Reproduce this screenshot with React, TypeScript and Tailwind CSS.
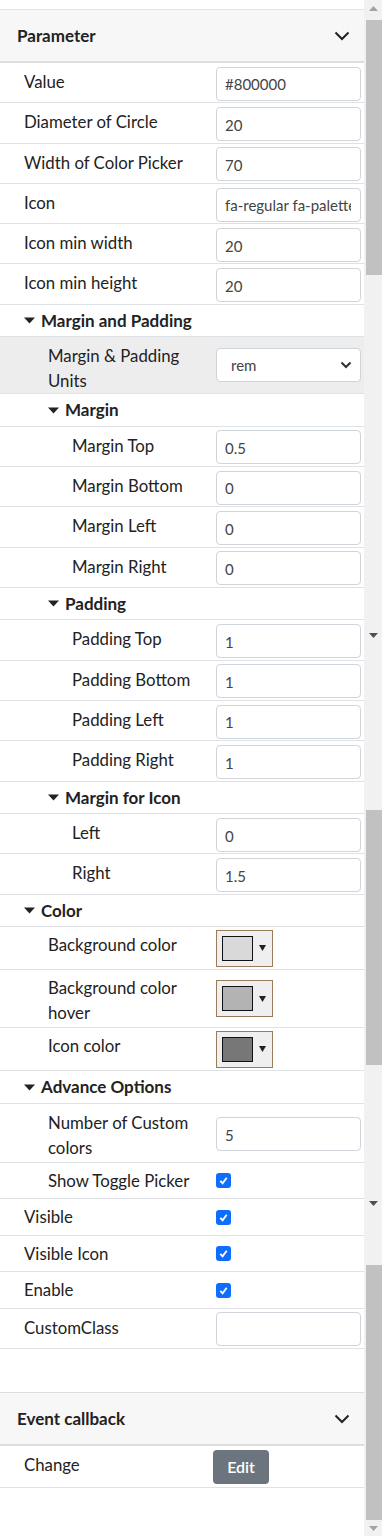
import React from 'react';

type Row =
  | { t: 'input'; label: string; value: string; lv: number }
  | { t: 'select'; label: string; value: string; lv: number }
  | { t: 'color'; label: string; fill: string; lv: number }
  | { t: 'check'; label: string; lv: number }
  | { t: 'head'; label: string; lv: number };

const rows: Row[] = [
  { t: 'input', label: 'Value', value: '#800000', lv: 0 },
  { t: 'input', label: 'Diameter of Circle', value: '20', lv: 0 },
  { t: 'input', label: 'Width of Color Picker', value: '70', lv: 0 },
  { t: 'input', label: 'Icon', value: 'fa-regular fa-palette', lv: 0 },
  { t: 'input', label: 'Icon min width', value: '20', lv: 0 },
  { t: 'input', label: 'Icon min height', value: '20', lv: 0 },
  { t: 'head', label: 'Margin and Padding', lv: 0 },
  { t: 'select', label: 'Margin & Padding Units', value: 'rem', lv: 1 },
  { t: 'head', label: 'Margin', lv: 1 },
  { t: 'input', label: 'Margin Top', value: '0.5', lv: 2 },
  { t: 'input', label: 'Margin Bottom', value: '0', lv: 2 },
  { t: 'input', label: 'Margin Left', value: '0', lv: 2 },
  { t: 'input', label: 'Margin Right', value: '0', lv: 2 },
  { t: 'head', label: 'Padding', lv: 1 },
  { t: 'input', label: 'Padding Top', value: '1', lv: 2 },
  { t: 'input', label: 'Padding Bottom', value: '1', lv: 2 },
  { t: 'input', label: 'Padding Left', value: '1', lv: 2 },
  { t: 'input', label: 'Padding Right', value: '1', lv: 2 },
  { t: 'head', label: 'Margin for Icon', lv: 1 },
  { t: 'input', label: 'Left', value: '0', lv: 2 },
  { t: 'input', label: 'Right', value: '1.5', lv: 2 },
  { t: 'head', label: 'Color', lv: 0 },
  { t: 'color', label: 'Background color', fill: '#d9d9d9', lv: 1 },
  { t: 'color', label: 'Background color hover', fill: '#b3b3b3', lv: 1 },
  { t: 'color', label: 'Icon color', fill: '#777777', lv: 1 },
  { t: 'head', label: 'Advance Options', lv: 0 },
  { t: 'input', label: 'Number of Custom colors', value: '5', lv: 1 },
  { t: 'check', label: 'Show Toggle Picker', lv: 1 },
  { t: 'check', label: 'Visible', lv: 0 },
  { t: 'check', label: 'Visible Icon', lv: 0 },
  { t: 'check', label: 'Enable', lv: 0 },
  { t: 'input', label: 'CustomClass', value: '', lv: 0 },
];

const indent = ['pl-6', 'pl-12', 'pl-[72px]'];

function Chevron() {
  return (
    <svg width="16" height="10" viewBox="0 0 16 10" className="mr-[14px]">
      <polyline points="1.5,1.5 8,8 14.5,1.5" fill="none" stroke="#222" strokeWidth="2" />
    </svg>
  );
}

function Checkbox() {
  return (
    <div className="w-[15px] h-[15px] rounded-[3px] bg-[#0d6efd] flex items-center justify-center">
      <svg width="11" height="11" viewBox="0 0 12 12">
        <polyline points="2.5,6.5 5,9 9.5,3" fill="none" stroke="#fff" strokeWidth="2" />
      </svg>
    </div>
  );
}

function PropRow({ row }: { row: Row }) {
  if (row.t === 'head') {
    return (
      <div className={`flex items-center h-[32.5px] border-b border-[#dee2e6] ${indent[row.lv]}`}>
        <svg width="11" height="7" viewBox="0 0 11 7" className="mr-[6px]">
          <polygon points="0,0.5 11,0.5 5.5,6.5" fill="#222" />
        </svg>
        <span className="font-bold text-[17px] text-[#222]">{row.label}</span>
      </div>
    );
  }
  let rowCls = 'min-h-[40.3px]';
  let labelPad = 'pt-[6px] pb-[2px]';
  if (row.t === 'select') {
    rowCls = 'min-h-[40px] bg-[#ededed]';
    labelPad = 'pt-[6px] pb-0';
  } else if (row.t === 'check') {
    rowCls = 'min-h-[36.5px]';
    labelPad = 'pt-[5px] pb-[5.5px]';
  } else if (row.t === 'color') {
    rowCls = 'min-h-[43px]';
    labelPad = 'pt-[5px] pb-[2px]';
  }
  return (
    <div className={`flex border-b border-[#dee2e6] ${rowCls}`}>
      <div className={`w-[216px] shrink-0 pr-2 leading-[25px] text-[16.8px] text-[#222] ${labelPad} ${indent[row.lv]}`}>
        {row.label}
      </div>
      <div className="flex-1 min-w-0 flex items-center pr-[3px]">
        {row.t === 'input' && (
          <div className="w-full h-[34px] border border-[#ced4da] rounded-[4px] bg-white pl-2 pr-[9px] pt-[2px] flex items-center text-[15px] text-[#444] mt-[2px]">
            <span className="flex-1 min-w-0 overflow-hidden whitespace-nowrap">{row.value}</span>
          </div>
        )}
        {row.t === 'select' && (
          <div className="w-full h-[34px] border border-[#ced4da] rounded-[4px] bg-white pl-[14px] pr-[8px] flex items-center justify-between text-[15px] text-[#444]">
            <span>{row.value}</span>
            <svg width="12" height="8" viewBox="0 0 12 8">
              <polyline points="1.5,1.5 6,6 10.5,1.5" fill="none" stroke="#333" strokeWidth="2" />
            </svg>
          </div>
        )}
        {row.t === 'color' && (
          <div className="w-[57px] h-[37px] border border-[#9c7b5b] bg-[#efefef] flex items-center pl-[5px]">
            <div className="w-[31px] h-[25px] border border-[#111]" style={{ backgroundColor: row.fill }} />
            <svg width="7" height="6" viewBox="0 0 7 6" className="ml-[6px]">
              <polygon points="0,0 7,0 3.5,6" fill="#222" />
            </svg>
          </div>
        )}
        {row.t === 'check' && <Checkbox />}
      </div>
    </div>
  );
}

function ScrollArrow({ up, dark }: { up?: boolean; dark?: boolean }) {
  return (
    <div className="h-[16px] flex items-center justify-center">
      <svg width="9" height="5" viewBox="0 0 9 5">
        <polygon points={up ? '0,5 9,5 4.5,0' : '0,0 9,0 4.5,5'} fill={dark ? '#505050' : '#a3a3a3'} />
      </svg>
    </div>
  );
}

export default function App() {
  return (
    <div className="flex w-[382px] h-[1536px] bg-white overflow-hidden" style={{ fontFamily: 'Lato, "Noto Sans", sans-serif' }}>
      <div className="w-[364px] shrink-0 flex flex-col">
        <div className="h-[10px] border-b border-[#e4e4e4]" />
        <div className="h-[53px] bg-[#f7f7f7] border-b-2 border-[#dedede] flex items-center justify-between pl-[17px]">
          <span className="font-bold text-[17px] text-[#222]">Parameter</span>
          <Chevron />
        </div>
        {rows.map((r, i) => (
          <PropRow key={i} row={r} />
        ))}
        <div className="h-[43px]" />
        <div className="h-[54px] bg-[#f7f7f7] border-t border-[#dedede] border-b-2 flex items-center justify-between pl-[17px]">
          <span className="font-bold text-[17px] text-[#222]">Event callback</span>
          <Chevron />
        </div>
        <div className="h-[42px] flex border-b border-[#dee2e6]">
          <div className="w-[213px] pl-6 pt-[6px] text-[16.8px] leading-[25px] text-[#222]">Change</div>
          <div className="flex items-center">
            <div className="w-[56px] h-[34px] rounded-[4px] bg-[#6c757d] text-white text-[16px] font-semibold flex items-center justify-center">
              Edit
            </div>
          </div>
        </div>
      </div>
      <div className="w-[18px] bg-[#f1f1f1] flex flex-col">
        <ScrollArrow up />
        <div className="h-[4px]" />
        <div className="h-[255px] ml-[2px] bg-[#c1c1c1]" />
        <div className="h-[352px]" />
        <ScrollArrow dark />
        <div className="h-[167px]" />
        <div className="h-[255px] ml-[2px] bg-[#c1c1c1]" />
        <div className="h-[130px]" />
        <ScrollArrow dark />
        <div className="h-[54px]" />
        <div className="h-[255px] ml-[2px] bg-[#c1c1c1]" />
        <ScrollArrow />
      </div>
    </div>
  );
}
